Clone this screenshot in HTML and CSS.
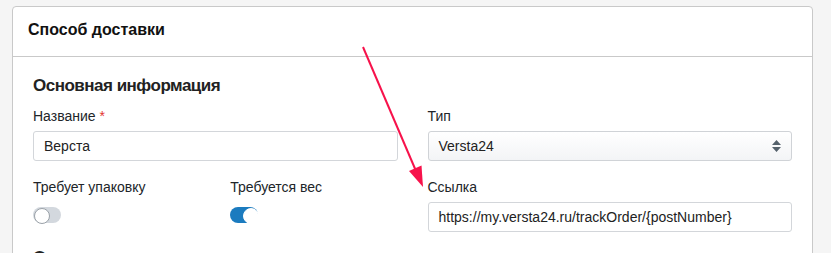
FILE: index.html
```html
<!DOCTYPE html>
<html lang="ru">
<head>
<meta charset="utf-8">
<title>Способ доставки</title>
<link rel="stylesheet" href="styles.css">
</head>
<body>
<div class="page">
  <div class="card">
    <div class="card-header">Способ доставки</div>
    <div class="card-body">
      <h3 class="section-title">Основная информация</h3>
      <div class="row">
        <div class="col">
          <label class="label">Название <span class="req">*</span></label>
          <div class="input">Верста</div>
        </div>
        <div class="col">
          <label class="label">Тип</label>
          <div class="input select">Versta24
            <svg class="sel-arrows" width="9" height="12" viewBox="0 0 9 12"><path d="M4.5 0 L9 5 L0 5 Z M0 7 L9 7 L4.5 12 Z" fill="#56626c"/></svg>
          </div>
        </div>
      </div>
      <div class="row row2">
        <div class="col">
          <div class="subrow">
            <div class="subcol">
              <label class="label">Требует упаковку</label>
              <span class="toggle"></span>
            </div>
            <div class="subcol">
              <label class="label">Требуется вес</label>
              <span class="toggle on"></span>
            </div>
          </div>
        </div>
        <div class="col">
          <label class="label">Ссылка</label>
          <div class="input">https://my.versta24.ru/trackOrder/{postNumber}</div>
        </div>
      </div>
      <h3 class="section-title next">Описание</h3>
    </div>
  </div>
  <svg class="arrow" width="831" height="253" viewBox="0 0 831 253">
    <line x1="363" y1="47" x2="416" y2="171" stroke="#f7124b" stroke-width="2"/>
    <polygon points="423,187 421.5,165.5 409,171" fill="#f7124b"/>
  </svg>
</div>
</body>
</html>
```
FILE: styles.css
```css
* { box-sizing: border-box; }
html, body { margin: 0; padding: 0; }
body {
  background: #f5f5f5;
  font-family: "Liberation Sans", Arial, sans-serif;
  color: #212529;
  font-size: 14px;
  width: 831px;
  height: 253px;
  overflow: hidden;
}
.page {
  position: relative;
  padding: 6px 18px 0 12px;
}
.card {
  background: #fff;
  border: 1px solid #c9c9c9;
  border-radius: 4px;
  height: 300px;
}
.card-header {
  font-size: 16px;
  font-weight: bold;
  line-height: 20px;
  padding: 13px 15px 16px;
  border-bottom: 1px solid #c9c9c9;
  color: #111;
}
.card-body {
  padding: 18px 20px 0;
}
.section-title {
  margin: 0 0 9px;
  font-size: 17px;
  letter-spacing: -0.5px;
  line-height: 22px;
  font-weight: bold;
  color: #222;
}
.section-title.next { margin-top: 15px; }
.row {
  display: flex;
  gap: 30px;
}
.row2 { margin-top: 16px; }
.col { flex: 1; min-width: 0; }
.label {
  display: block;
  line-height: 20px;
  margin-bottom: 5px;
}
.req { color: #e3342f; }
.input {
  height: 30px;
  border: 1px solid #d3d6da;
  border-radius: 3px;
  padding: 0 10px;
  line-height: 28px;
  color: #222;
  background: #fff;
}
.select {
  position: relative;
  background: linear-gradient(#ffffff, #f3f4f6);
  border-color: #d0d3d7;
}
.sel-arrows {
  position: absolute;
  right: 10px;
  top: 8px;
}
.subrow {
  display: flex;
  gap: 30px;
}
.subcol { flex: 1; }
.subcol .label { margin-bottom: 10px; }
.toggle {
  display: block;
  position: relative;
  width: 28px;
  height: 16px;
  border-radius: 8px;
  background: #d3d8de;
}
.toggle::after {
  content: "";
  position: absolute;
  left: 1px;
  top: 1px;
  width: 14px;
  height: 14px;
  border-radius: 50%;
  background: #fff;
  border: 1px solid #9aa1a8;
}
.toggle.on { background: #1b7bbf; }
.toggle.on::after {
  left: 13px;
  border-color: #fff;
}
.arrow {
  position: absolute;
  left: 0;
  top: 0;
  pointer-events: none;
}
```
